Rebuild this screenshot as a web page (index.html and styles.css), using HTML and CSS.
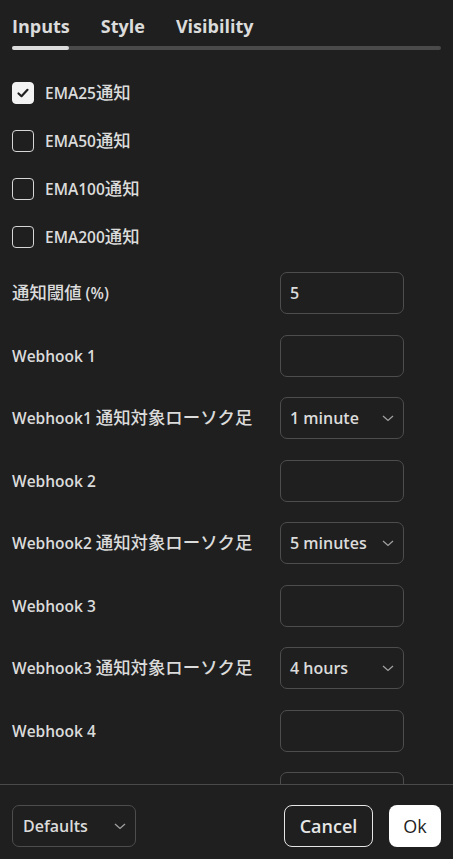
FILE: index.html
```html
<!DOCTYPE html>
<html lang="ja">
<head>
<meta charset="utf-8">
<title>Settings</title>
<link rel="stylesheet" href="styles.css">
</head>
<body>
<div class="dialog">
  <div class="header">
    <div class="tabs">
      <div class="tab active">Inputs</div>
      <div class="tab">Style</div>
      <div class="tab">Visibility</div>
    </div>
    <div class="track"><div class="track-active"></div></div>
  </div>
  <div class="content">
    <div class="checks">
      <div class="check-row"><span class="box checked"><svg width="14" height="12" viewBox="0 0 14 12"><path d="M2.5 6.5 L5.5 9.2 L11.5 2.8" fill="none" stroke="#1f1f1f" stroke-width="2.2" stroke-linecap="round" stroke-linejoin="round"/></svg></span><span class="label">EMA25<span class="ja">通知</span></span></div>
      <div class="check-row"><span class="box"></span><span class="label">EMA50<span class="ja">通知</span></span></div>
      <div class="check-row"><span class="box"></span><span class="label">EMA100<span class="ja">通知</span></span></div>
      <div class="check-row"><span class="box"></span><span class="label">EMA200<span class="ja">通知</span></span></div>
    </div>
    <div class="fields">
      <div class="field"><span class="label"><span class="ja">通知閾値</span> (%)</span><div class="control">5</div></div>
      <div class="field"><span class="label">Webhook 1</span><div class="control"></div></div>
      <div class="field"><span class="label">Webhook1 <span class="ja">通知対象ローソク足</span></span><div class="control select"><span>1 minute</span><svg class="chev" width="12" height="7" viewBox="0 0 12 7"><path d="M1 1 L6 5.5 L11 1" fill="none" stroke="#a0a0a0" stroke-width="1.3"/></svg></div></div>
      <div class="field"><span class="label">Webhook 2</span><div class="control"></div></div>
      <div class="field"><span class="label">Webhook2 <span class="ja">通知対象ローソク足</span></span><div class="control select"><span>5 minutes</span><svg class="chev" width="12" height="7" viewBox="0 0 12 7"><path d="M1 1 L6 5.5 L11 1" fill="none" stroke="#a0a0a0" stroke-width="1.3"/></svg></div></div>
      <div class="field"><span class="label">Webhook 3</span><div class="control"></div></div>
      <div class="field"><span class="label">Webhook3 <span class="ja">通知対象ローソク足</span></span><div class="control select"><span>4 hours</span><svg class="chev" width="12" height="7" viewBox="0 0 12 7"><path d="M1 1 L6 5.5 L11 1" fill="none" stroke="#a0a0a0" stroke-width="1.3"/></svg></div></div>
      <div class="field"><span class="label">Webhook 4</span><div class="control"></div></div>
      <div class="field"><span class="label">Webhook4 <span class="ja">通知対象ローソク足</span></span><div class="control select"><span>1 day</span><svg class="chev" width="12" height="7" viewBox="0 0 12 7"><path d="M1 1 L6 5.5 L11 1" fill="none" stroke="#a0a0a0" stroke-width="1.3"/></svg></div></div>
    </div>
  </div>
  <div class="footer">
    <div class="control select defaults"><span>Defaults</span><svg class="chev" width="12" height="7" viewBox="0 0 12 7"><path d="M1 1 L6 5.5 L11 1" fill="none" stroke="#a0a0a0" stroke-width="1.3"/></svg></div>
    <div class="buttons">
      <div class="btn cancel">Cancel</div>
      <div class="btn ok">Ok</div>
    </div>
  </div>
</div>
</body>
</html>
```
FILE: styles.css
```css
* { box-sizing: border-box; }
html, body { margin: 0; padding: 0; background: #1f1f1f; }
body {
  font-family: "Open Sans", "Noto Sans CJK JP", sans-serif;
  color: #dbdbdb;
}
.dialog {
  width: 453px;
  height: 859px;
  display: flex;
  flex-direction: column;
  overflow: hidden;
}
.header { padding: 14px 12px 0 12px; }
.tabs { display: flex; gap: 31px; }
.tab {
  font-size: 18px;
  font-weight: 700;
  line-height: 24px;
  color: #dbdbdb;
}
.track {
  margin-top: 8px;
  height: 4px;
  border-radius: 2px;
  background: #4a4a4a;
}
.track-active {
  width: 57px;
  height: 4px;
  border-radius: 2px;
  background: #dbdbdb;
}
.content {
  flex: 1;
  overflow: hidden;
  padding: 19px 12px 0 12px;
}
.label {
  font-size: 15.5px;
  font-weight: 600;
  color: #dbdbdb;
  white-space: nowrap;
  display: flex;
  align-items: center;
  line-height: 22px;
}
.field .label { white-space: pre; }
.ja {
  font-family: "Noto Sans CJK JP", sans-serif;
  font-size: 17.4px;
  font-weight: 500;
  line-height: 22px;
  position: relative;
  top: -1px;
}
.check-row {
  height: 48px;
  display: flex;
  align-items: center;
  gap: 11px;
}
.box {
  width: 22px;
  height: 22px;
  border: 1px solid #d6d6d6;
  border-radius: 4px;
  display: flex;
  align-items: center;
  justify-content: center;
}
.box.checked { background: #f2f2f2; border-color: #f2f2f2; }
.fields {
  margin-top: 11px;
  display: flex;
  flex-direction: column;
  gap: 20.5px;
}
.field {
  display: grid;
  grid-template-columns: 268px 124px;
  align-items: center;
  height: 42px;
}
.control {
  height: 42px;
  width: 124px;
  border: 1px solid #4d4d4d;
  border-radius: 7px;
  display: flex;
  align-items: center;
  padding: 0 9px;
  font-size: 16px;
  font-weight: 600;
  color: #dbdbdb;
}
.select { justify-content: space-between; padding-right: 9px; }
.chev { display: block; }
.footer {
  border-top: 1px solid #4a4a4a;
  padding: 20px 12px 12px 12px;
  display: flex;
  justify-content: space-between;
  align-items: center;
}
.defaults { padding-left: 10px; }
.buttons { display: flex; gap: 16px; }
.btn {
  height: 42px;
  border-radius: 8px;
  display: flex;
  align-items: center;
  justify-content: center;
  font-size: 18px;
}
.cancel {
  width: 89px;
  border: 1px solid #e6e6e6;
  font-weight: 600;
  color: #e6e6e6;
}
.ok {
  width: 52px;
  background: #ffffff;
  color: #1f1f1f;
  font-weight: 400;
}
```
